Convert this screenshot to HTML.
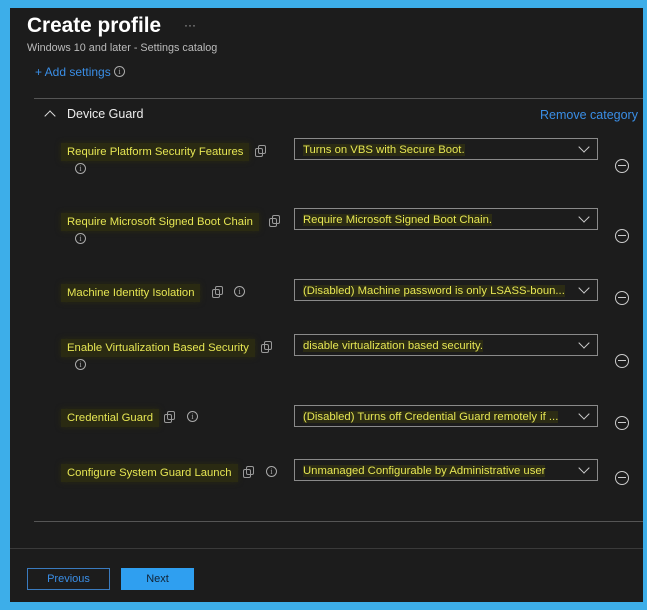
<!DOCTYPE html>
<html><head><style>
*{margin:0;padding:0;box-sizing:border-box}
body{width:647px;height:610px;background:#3daee9;position:relative;overflow:hidden;font-family:"Liberation Sans",sans-serif}
#p{position:absolute;left:10px;top:8px;width:633px;height:594px;background:#1c1c1c}
.a{position:absolute;white-space:nowrap}
.lbl{color:#e6e653;font-size:11.3px;background:#2a2a12;padding:3px 6px;box-shadow:0 0 6px #2a2a12}
.dd{position:absolute;left:284px;width:304px;height:22px;border:1px solid #8a8a8a;color:#e6e653;font-size:11.3px;padding:5px 8px 0;background:#1c1c1c}
.dd span{background:#2c2c14}
.dd:after{content:"";position:absolute;right:9px;top:4px;width:7px;height:7px;border-right:1px solid #ccc;border-bottom:1px solid #ccc;transform:rotate(45deg)}
.m{position:absolute;left:605px;width:14px;height:14px;border:1.3px solid #ccc;border-radius:50%}
.m:after{content:"";position:absolute;left:2px;right:2px;top:5px;height:1.3px;background:#ccc}
.i{position:absolute;width:11px;height:11px;border:1px solid #aaa;border-radius:50%;font-size:8px;color:#aaa;text-align:center;line-height:9px;font-family:"Liberation Serif",serif}
.c{position:absolute;width:10px;height:10px}
.c:before,.c:after{content:"";position:absolute;width:6px;height:7px;border:1px solid #999;border-radius:2px}
.c:before{left:0;top:3px}.c:after{left:3px;top:0}
</style></head><body>
<div id="p">
<div class="a" style="left:17px;top:6px;color:#fff;font-size:20.8px;font-weight:bold">Create profile</div>
<div class="a" style="left:174px;top:10px;color:#aaa;font-size:12px">···</div>
<div class="a" style="left:17px;top:34px;color:#bbb;font-size:10.8px">Windows 10 and later - Settings catalog</div>
<div class="a" style="left:25px;top:57px;color:#3a8ee6;font-size:12px">+ Add settings</div>
<div class="i" style="left:104px;top:58px">i</div>
<div class="a" style="left:24px;top:90px;width:609px;height:1px;background:#555"></div>
<div class="a" style="left:36px;top:104px;width:8px;height:8px;border-left:1.3px solid #ddd;border-top:1.3px solid #ddd;transform:rotate(45deg)"></div>
<div class="a" style="left:57px;top:99px;color:#eee;font-size:12.5px">Device Guard</div>
<div class="a" style="left:530px;top:100px;color:#3a8ee6;font-size:12.5px">Remove category</div>

<div class="a lbl" style="left:51px;top:135px">Require Platform Security Features</div>
<div class="c" style="left:245px;top:137px"></div>
<div class="i" style="left:65px;top:155px">i</div>
<div class="dd" style="top:130px"><span>Turns on VBS with Secure Boot.</span></div>
<div class="m" style="top:151px"></div>

<div class="a lbl" style="left:51px;top:205px">Require Microsoft Signed Boot Chain</div>
<div class="c" style="left:259px;top:207px"></div>
<div class="i" style="left:65px;top:225px">i</div>
<div class="dd" style="top:200px"><span>Require Microsoft Signed Boot Chain.</span></div>
<div class="m" style="top:221px"></div>

<div class="a lbl" style="left:51px;top:276px">Machine Identity Isolation</div>
<div class="c" style="left:202px;top:278px"></div>
<div class="i" style="left:224px;top:278px">i</div>
<div class="dd" style="top:271px"><span>(Disabled) Machine password is only LSASS-boun...</span></div>
<div class="m" style="top:283px"></div>

<div class="a lbl" style="left:51px;top:331px">Enable Virtualization Based Security</div>
<div class="c" style="left:251px;top:333px"></div>
<div class="i" style="left:65px;top:351px">i</div>
<div class="dd" style="top:326px"><span>disable virtualization based security.</span></div>
<div class="m" style="top:346px"></div>

<div class="a lbl" style="left:51px;top:401px">Credential Guard</div>
<div class="c" style="left:154px;top:403px"></div>
<div class="i" style="left:177px;top:403px">i</div>
<div class="dd" style="top:397px"><span>(Disabled) Turns off Credential Guard remotely if ...</span></div>
<div class="m" style="top:408px"></div>

<div class="a lbl" style="left:51px;top:456px">Configure System Guard Launch</div>
<div class="c" style="left:233px;top:458px"></div>
<div class="i" style="left:256px;top:458px">i</div>
<div class="dd" style="top:451px"><span>Unmanaged Configurable by Administrative user</span></div>
<div class="m" style="top:463px"></div>

<div class="a" style="left:24px;top:513px;width:609px;height:1px;background:#555"></div>
<div class="a" style="left:0;top:540px;width:633px;height:1px;background:#3a3a3a"></div>
<div class="a" style="left:17px;top:560px;width:83px;height:22px;border:1px solid #3a7bbf;color:#3a8ee6;font-size:11px;text-align:center;line-height:20px">Previous</div>
<div class="a" style="left:111px;top:560px;width:73px;height:22px;background:#2f9ff0;color:#123;font-size:11px;text-align:center;line-height:22px">Next</div>
</div>
</body></html>
